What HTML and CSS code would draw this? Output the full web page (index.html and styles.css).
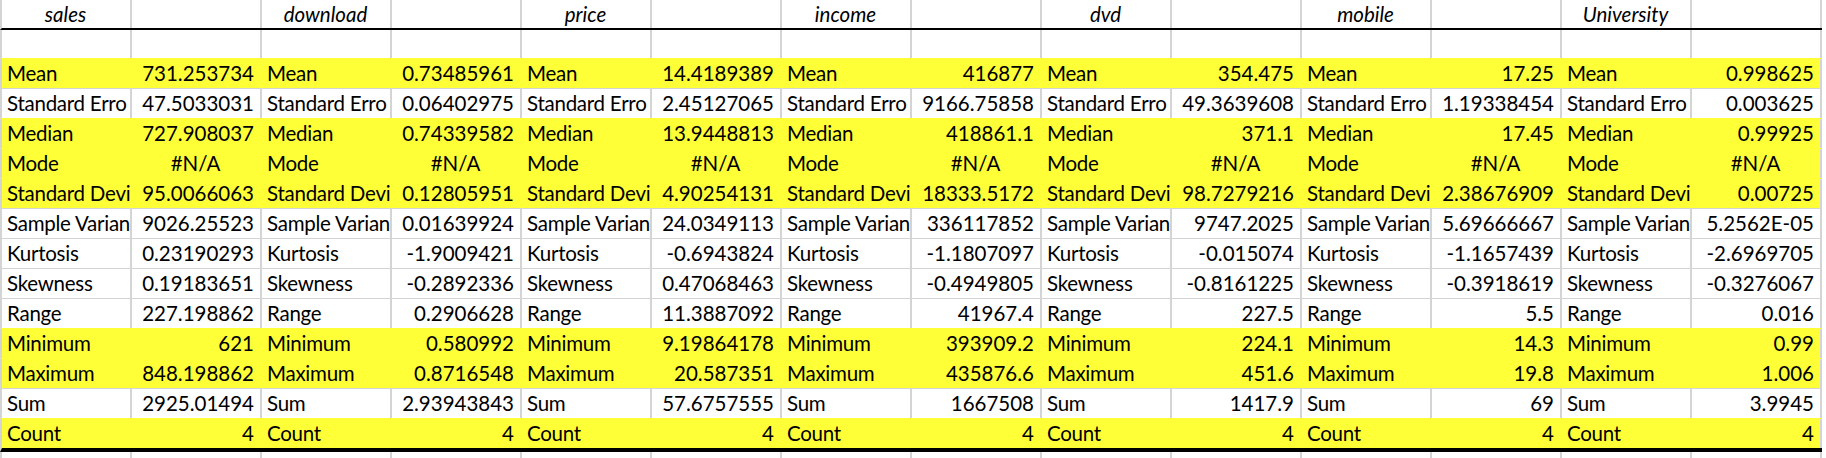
FILE: index.html
```html
<!DOCTYPE html>
<html>
<head>
<meta charset="utf-8">
<link rel="stylesheet" href="styles.css">
</head>
<body>
<div class="sheet">
  <div class="row head"><div>sales</div><div></div><div>download</div><div></div><div>price</div><div></div><div>income</div><div></div><div>dvd</div><div></div><div>mobile</div><div></div><div>University</div><div></div></div>
  <div class="row blank"><div></div><div></div><div></div><div></div><div></div><div></div><div></div><div></div><div></div><div></div><div></div><div></div><div></div><div></div></div>
  <div class="row hl"><div class="l">Mean</div><div class="n">731.253734</div><div class="l">Mean</div><div class="n">0.73485961</div><div class="l">Mean</div><div class="n">14.4189389</div><div class="l">Mean</div><div class="n">416877</div><div class="l">Mean</div><div class="n">354.475</div><div class="l">Mean</div><div class="n">17.25</div><div class="l">Mean</div><div class="n">0.998625</div></div>
  <div class="row"><div class="l">Standard Erro</div><div class="n">47.5033031</div><div class="l">Standard Erro</div><div class="n">0.06402975</div><div class="l">Standard Erro</div><div class="n">2.45127065</div><div class="l">Standard Erro</div><div class="n">9166.75858</div><div class="l">Standard Erro</div><div class="n">49.3639608</div><div class="l">Standard Erro</div><div class="n">1.19338454</div><div class="l">Standard Erro</div><div class="n">0.003625</div></div>
  <div class="row hl"><div class="l">Median</div><div class="n">727.908037</div><div class="l">Median</div><div class="n">0.74339582</div><div class="l">Median</div><div class="n">13.9448813</div><div class="l">Median</div><div class="n">418861.1</div><div class="l">Median</div><div class="n">371.1</div><div class="l">Median</div><div class="n">17.45</div><div class="l">Median</div><div class="n">0.99925</div></div>
  <div class="row hl"><div class="l">Mode</div><div class="e">#N/A</div><div class="l">Mode</div><div class="e">#N/A</div><div class="l">Mode</div><div class="e">#N/A</div><div class="l">Mode</div><div class="e">#N/A</div><div class="l">Mode</div><div class="e">#N/A</div><div class="l">Mode</div><div class="e">#N/A</div><div class="l">Mode</div><div class="e">#N/A</div></div>
  <div class="row hl"><div class="l">Standard Devi</div><div class="n">95.0066063</div><div class="l">Standard Devi</div><div class="n">0.12805951</div><div class="l">Standard Devi</div><div class="n">4.90254131</div><div class="l">Standard Devi</div><div class="n">18333.5172</div><div class="l">Standard Devi</div><div class="n">98.7279216</div><div class="l">Standard Devi</div><div class="n">2.38676909</div><div class="l">Standard Devi</div><div class="n">0.00725</div></div>
  <div class="row"><div class="l">Sample Varian</div><div class="n">9026.25523</div><div class="l">Sample Varian</div><div class="n">0.01639924</div><div class="l">Sample Varian</div><div class="n">24.0349113</div><div class="l">Sample Varian</div><div class="n">336117852</div><div class="l">Sample Varian</div><div class="n">9747.2025</div><div class="l">Sample Varian</div><div class="n">5.69666667</div><div class="l">Sample Varian</div><div class="n">5.2562E-05</div></div>
  <div class="row"><div class="l">Kurtosis</div><div class="n">0.23190293</div><div class="l">Kurtosis</div><div class="n">-1.9009421</div><div class="l">Kurtosis</div><div class="n">-0.6943824</div><div class="l">Kurtosis</div><div class="n">-1.1807097</div><div class="l">Kurtosis</div><div class="n">-0.015074</div><div class="l">Kurtosis</div><div class="n">-1.1657439</div><div class="l">Kurtosis</div><div class="n">-2.6969705</div></div>
  <div class="row"><div class="l">Skewness</div><div class="n">0.19183651</div><div class="l">Skewness</div><div class="n">-0.2892336</div><div class="l">Skewness</div><div class="n">0.47068463</div><div class="l">Skewness</div><div class="n">-0.4949805</div><div class="l">Skewness</div><div class="n">-0.8161225</div><div class="l">Skewness</div><div class="n">-0.3918619</div><div class="l">Skewness</div><div class="n">-0.3276067</div></div>
  <div class="row"><div class="l">Range</div><div class="n">227.198862</div><div class="l">Range</div><div class="n">0.2906628</div><div class="l">Range</div><div class="n">11.3887092</div><div class="l">Range</div><div class="n">41967.4</div><div class="l">Range</div><div class="n">227.5</div><div class="l">Range</div><div class="n">5.5</div><div class="l">Range</div><div class="n">0.016</div></div>
  <div class="row hl"><div class="l">Minimum</div><div class="n">621</div><div class="l">Minimum</div><div class="n">0.580992</div><div class="l">Minimum</div><div class="n">9.19864178</div><div class="l">Minimum</div><div class="n">393909.2</div><div class="l">Minimum</div><div class="n">224.1</div><div class="l">Minimum</div><div class="n">14.3</div><div class="l">Minimum</div><div class="n">0.99</div></div>
  <div class="row hl"><div class="l">Maximum</div><div class="n">848.198862</div><div class="l">Maximum</div><div class="n">0.8716548</div><div class="l">Maximum</div><div class="n">20.587351</div><div class="l">Maximum</div><div class="n">435876.6</div><div class="l">Maximum</div><div class="n">451.6</div><div class="l">Maximum</div><div class="n">19.8</div><div class="l">Maximum</div><div class="n">1.006</div></div>
  <div class="row"><div class="l">Sum</div><div class="n">2925.01494</div><div class="l">Sum</div><div class="n">2.93943843</div><div class="l">Sum</div><div class="n">57.6757555</div><div class="l">Sum</div><div class="n">1667508</div><div class="l">Sum</div><div class="n">1417.9</div><div class="l">Sum</div><div class="n">69</div><div class="l">Sum</div><div class="n">3.9945</div></div>
  <div class="row hl last"><div class="l">Count</div><div class="n">4</div><div class="l">Count</div><div class="n">4</div><div class="l">Count</div><div class="n">4</div><div class="l">Count</div><div class="n">4</div><div class="l">Count</div><div class="n">4</div><div class="l">Count</div><div class="n">4</div><div class="l">Count</div><div class="n">4</div></div>
  <div class="row tail"><div></div><div></div><div></div><div></div><div></div><div></div><div></div><div></div><div></div><div></div><div></div><div></div><div></div><div></div></div>
</div>
</body>
</html>
```
FILE: styles.css
```css
html, body {
  margin: 0;
  padding: 0;
  background: #ffffff;
}

body {
  font-family: Lato, "Liberation Sans", sans-serif;
  font-size: 20.5px;
  color: #000000;
}

.sheet {
  width: 1826px;
  height: 458px;
  overflow: hidden;
}

.row {
  display: grid;
  grid-template-columns: repeat(14, 130px);
  width: 1822px;
  height: 30px;
  box-sizing: border-box;
  border-left: 2px solid #d4d4d4;
  border-top: 1px solid #d4d4d4;
  line-height: 29px;
  background: #ffffff;
}

.row > div {
  border-right: 2px solid #d4d4d4;
  overflow: hidden;
  white-space: nowrap;
  padding: 0 6px 0 5px;
}

.hl {
  background: #ffff38;
  border-top-color: transparent;
}

.hl > div {
  border-right-color: transparent;
}

.hl > div:last-child {
  border-right-color: #d4d4d4;
}

.l {
  text-align: left;
  padding-right: 0 !important;
  letter-spacing: -0.25px;
}

.n {
  text-align: right;
}

.e {
  text-align: center;
}

.head {
  border-top: 0;
  border-bottom: 2px solid #000000;
  line-height: 28px;
}

.head > div {
  font-style: italic;
  text-align: center;
}

.blank {
  height: 28px;
  border-top: 0;
}

.last {
  height: 34px;
  border-bottom: 4px solid #000000;
}

.tail {
  height: 6px;
  border-top: 0;
}
```
